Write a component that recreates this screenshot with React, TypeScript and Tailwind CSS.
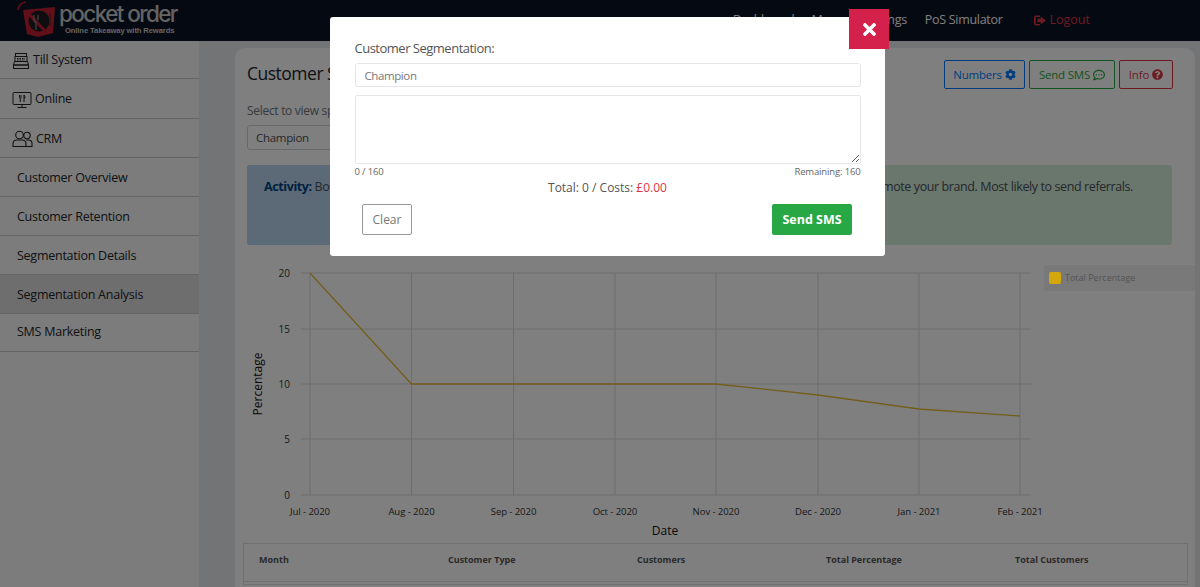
import { FaCog, FaQuestionCircle, FaRegCommentDots, FaTimes } from "react-icons/fa";

const sideItems = ["Customer Overview", "Customer Retention", "Segmentation Details", "Segmentation Analysis"];
const tableHead = ["Month", "Customer Type", "Customers", "Total Percentage", "Total Customers"];

const gridX = [310, 411.5, 513.5, 615, 716, 818, 919, 1020];
const gridY = [
  { y: 273, label: "20" },
  { y: 329, label: "15" },
  { y: 384, label: "10" },
  { y: 439, label: "5" },
  { y: 495, label: "0" },
];
const months = ["Jul - 2020", "Aug - 2020", "Sep - 2020", "Oct - 2020", "Nov - 2020", "Dec - 2020", "Jan - 2021", "Feb - 2021"];
const points = "310,273 411.5,384 513.5,384 615,384 716,384 818,395 919,409 1020,416";

function TillIcon() {
  return (
    <svg width="18" height="18" viewBox="0 0 18 18" fill="none" stroke="#222" strokeWidth="1">
      <rect x="3.5" y="1.5" width="11" height="3" />
      <rect x="3" y="4.5" width="12" height="5" />
      <path d="M5 6.5h8M5 8h8" strokeWidth="1.2" strokeDasharray="1.5 1" />
      <path d="M2.5 9.5h13l1 3.5h-15z" />
      <rect x="1.5" y="13" width="15" height="3.5" />
    </svg>
  );
}

function OnlineIcon() {
  return (
    <svg width="20" height="18" viewBox="0 0 20 18" fill="none" stroke="#222" strokeWidth="1">
      <rect x="1" y="1.5" width="18" height="12" rx="1" />
      <path d="M10 13.5v2.5M5.5 16.5h9" />
      <path d="M7.5 4v2.5q0 1 .8 1V11M9 4v3.5M12 4v7M12 4q1 1 1 3h-1" />
    </svg>
  );
}

function UsersIcon() {
  return (
    <svg width="21" height="18" viewBox="0 0 21 18" fill="none" stroke="#222" strokeWidth="1.1">
      <circle cx="7.5" cy="5" r="3.8" />
      <circle cx="15" cy="5.5" r="3.2" />
      <path d="M1 16.5v-2.5q0-4 4-4h5q4 0 4 4v2.5z" />
      <path d="M14 10h2.5q3.5 0 3.5 3.5v3h-6" />
    </svg>
  );
}

function LogoutIcon() {
  return (
    <svg width="12" height="11" viewBox="0 0 12 11" fill="#dc3545">
      <path d="M2 0.5h4v1.6H2.6q-.9 0-.9.9v5q0 .9.9.9H6v1.6H2q-2 0-2-2V2.5q0-2 2-2z" />
      <path d="M6.8 1.5 12 5.5 6.8 9.5V7.2H3.5V3.8h3.3z" />
    </svg>
  );
}

function Logo() {
  return (
    <div className="flex items-start">
      <svg width="44" height="38" viewBox="0 0 44 38" className="mt-[-1px] ml-[16px]">
        <path d="M2 9 Q3 2 10 1" fill="none" stroke="#c32034" strokeWidth="1.6" />
        <path d="M7 9 L39 6 L37 32 L22 36 L11 33 Z" fill="#c32034" />
        <circle cx="23" cy="20" r="10.5" fill="#1d1a1e" />
        <path d="M10 10 L31 32" stroke="#c32034" strokeWidth="3" />
        <path d="M18 14v5q0 2 2 2v8M22 14v5" stroke="#8c7a7d" strokeWidth="1.3" fill="none" />
        <path d="M34 12v13" stroke="#8c2030" strokeWidth="2" />
      </svg>
      <div className="ml-[-1px] flex flex-col text-[#c9c9c9]">
        <span className="font-['Inter',sans-serif] text-[22.5px] leading-[24px] font-medium tracking-[-1.6px]">pocket order</span>
        <span className="ml-[6px] font-['Liberation_Sans',sans-serif] text-[7.6px] leading-[9px] font-bold tracking-[-0.1px]">Online Takeaway with Rewards</span>
      </div>
    </div>
  );
}

function Chart() {
  return (
    <svg width="801" height="281" viewBox="243 262 801 281" className="shrink-0 font-['Open_Sans',sans-serif]">
      {gridX.map((x) => (
        <line key={x} x1={x} x2={x} y1="273" y2="495" stroke="#dadada" strokeWidth="1" />
      ))}
      {gridY.map((g) => (
        <g key={g.y}>
          <line x1="301" x2="1031" y1={g.y} y2={g.y} stroke="#dadada" strokeWidth="1" />
          <text x="290" y={g.y + 3.5} textAnchor="end" fontSize="10" fill="#333">
            {g.label}
          </text>
        </g>
      ))}
      {months.map((m, i) => (
        <text key={m} x={gridX[i]} y="515" textAnchor="middle" fontSize="9.6" letterSpacing="-0.1" fill="#333">
          {m}
        </text>
      ))}
      <polyline points={points} fill="none" stroke="#e6bc3a" strokeWidth="1.3" />
      <text x="0" y="0" transform="translate(262 384) rotate(-90)" textAnchor="middle" fontSize="12" fill="#111">
        Percentage
      </text>
      <text x="665" y="535" textAnchor="middle" fontSize="12" fill="#111">
        Date
      </text>
    </svg>
  );
}

export default function App() {
  return (
    <div className="relative h-[587px] w-[1200px] overflow-hidden bg-[#e6e8ea] font-['Open_Sans',sans-serif] text-[#212529]">
      <header className="flex h-[41px] items-center justify-between bg-[#0b1222]">
        <Logo />
        <nav className="flex items-center text-[12.5px] tracking-[-0.3px] text-white">
          <span>Dashboard</span>
          <span className="ml-[17px]">Menu</span>
          <span className="ml-[19px]">Settings</span>
          <span className="ml-[18px]">PoS Simulator</span>
          <span className="mr-[110px] ml-[31px] flex items-center gap-[4px] tracking-normal text-[#dc3545]">
            <LogoutIcon />
            Logout
          </span>
        </nav>
      </header>

      <div className="flex">
        <aside className="h-[546px] w-[199px] shrink-0 bg-[#f8f8f8] text-[12.5px] tracking-[-0.25px]">
          <div className="flex h-[38px] items-center gap-[3px] border-b border-[#c8c8c8] pt-[2px] pl-[12px]">
            <TillIcon />
            Till System
          </div>
          <div className="flex h-[40px] items-center gap-[3px] border-b border-[#c8c8c8] pt-[2px] pl-[12px]">
            <OnlineIcon />
            Online
          </div>
          <div className="flex h-[39px] items-center gap-[3px] border-b border-[#c8c8c8] pt-[2px] pl-[12px]">
            <UsersIcon />
            CRM
          </div>
          {sideItems.map((item) => (
            <div
              key={item}
              className={
                item === "Segmentation Analysis"
                  ? "flex h-[39px] items-center border-b border-[#c8c8c8] bg-[#dcdcdc] pt-[2px] pl-[17px]"
                  : "flex h-[39px] items-center border-b border-[#c8c8c8] pt-[2px] pl-[17px]"
              }
            >
              {item}
            </div>
          ))}
          <div className="flex h-[38px] items-center border-b border-[#c8c8c8] pl-[17px]">SMS Marketing</div>
        </aside>

        <main className="min-w-0 flex-1 pt-[7px] pr-[5px] pl-[36px]">
          <div className="h-[600px] rounded-t-[10px] bg-white px-[8px]">
            <div className="flex items-start justify-between px-[4px] pt-[12px] pr-[14px]">
              <div className="min-w-0">
                <h1 className="text-[17.5px] leading-[26px] tracking-[-0.5px]">Customer Segmentation Analysis</h1>
                <p className="mt-[16px] text-[12px] leading-[18px] tracking-[-0.3px] text-[#6c757d]">Select to view specific customers</p>
                <div className="mt-[5px] flex h-[25px] w-[240px] items-center rounded-[3px] border border-[#ced4da] pl-[8px] text-[11.5px] tracking-[-0.3px] text-[#495057]">
                  Champion
                </div>
              </div>
              <div className="flex gap-[4px] text-[11.5px] tracking-[-0.2px]">
                <button className="flex h-[29px] w-[81px] items-center justify-center gap-[3px] rounded-[2px] border border-[#007bff] text-[#007bff]">
                  Numbers <FaCog className="text-[11px]" />
                </button>
                <button className="flex h-[29px] w-[86px] items-center justify-center gap-[3px] rounded-[2px] border border-[#28a745] text-[#28a745]">
                  Send SMS <FaRegCommentDots className="text-[12px]" />
                </button>
                <button className="flex h-[29px] w-[54px] items-center justify-center gap-[3px] rounded-[2px] border border-[#dc3545] text-[#dc3545]">
                  Info <FaQuestionCircle className="text-[11px]" />
                </button>
              </div>
            </div>

            <div className="mt-[15px] mr-[15px] ml-[4px] flex h-[80px] overflow-hidden rounded-[3px] text-[12.5px] tracking-[-0.4px]">
              <div className="w-[400px] bg-[#b8d4ee] pt-[13px] pl-[17px] text-[#495057]">
                <b className="text-[#004085]">Activity:</b> Bought recently and often
              </div>
              <div className="flex flex-1 justify-end bg-[#d4eedb] pt-[13px] pr-[39px] text-[#495057]">
                Promote your brand. Most likely to send referrals.
              </div>
            </div>

            <div className="mt-[17px] flex">
              <Chart />
              <div className="mt-[3px] mr-[-8px] flex h-[26px] flex-1 items-center gap-[4px] bg-[#f2f2f2] pl-[5px] text-[9px] text-[#aaa]">
                <span className="relative z-20 h-[12px] w-[12px] rounded-[2px] bg-[#d3a70c]" />
                Total Percentage
              </div>
            </div>

            <div className="mr-[-1px] flex h-[39px] border border-[#e0e0e0] pt-[9px] text-[9px] font-bold text-[#555]">
              {tableHead.map((h) => (
                <div key={h} className="w-[189px] shrink-0 pl-[15px]">
                  {h}
                </div>
              ))}
            </div>
            <div className="mr-[-1px] h-[3px] border-x border-b border-[#e0e0e0]" />
          </div>
        </main>
      </div>

      {/* backdrop + SMS dialog */}
      <div className="absolute inset-0 z-10 bg-black/50" />
      <div className="absolute top-[17px] left-[330px] z-30 h-[239px] w-[555px] rounded-[3px] bg-white px-[24.5px] pt-[22px] text-[#555]">
        <button className="absolute top-[-8px] right-[-4px] flex h-[40px] w-[40px] items-center justify-center bg-[#d4214b] text-[19px] text-white">
          <FaTimes />
        </button>
        <label className="block text-[13px] leading-[18px] tracking-[-0.5px]">Customer Segmentation:</label>
        <input
          readOnly
          value="Champion"
          className="mt-[6px] block h-[24px] w-full rounded-[3px] border border-[#e4e6e8] px-[9px] text-[11.5px] tracking-[-0.4px] text-[#777] outline-none"
        />
        <textarea className="mt-[8px] block h-[69px] w-full rounded-[2px] border border-[#e4e6e8] outline-none" readOnly />
        <div className="mt-[1px] flex justify-between text-[9.5px] leading-[13px] tracking-[-0.15px] text-[#666]">
          <span>0 / 160</span>
          <span>Remaining: 160</span>
        </div>
        <p className="mt-[1px] text-center text-[12px] leading-[18px]">
          Total: 0 / Costs: <span className="text-[#dc3545]">£0.00</span>
        </p>
        <div className="mt-[7px] flex justify-between pr-[8.5px] pl-[7.5px]">
          <button className="h-[31px] w-[50px] rounded-[2px] border border-[#999] pt-[1px] text-[12px] text-[#777]">Clear</button>
          <button className="h-[31px] w-[80px] rounded-[2px] bg-[#28a745] pt-[1px] text-[12.5px] font-bold text-white">Send SMS</button>
        </div>
      </div>
    </div>
  );
}
